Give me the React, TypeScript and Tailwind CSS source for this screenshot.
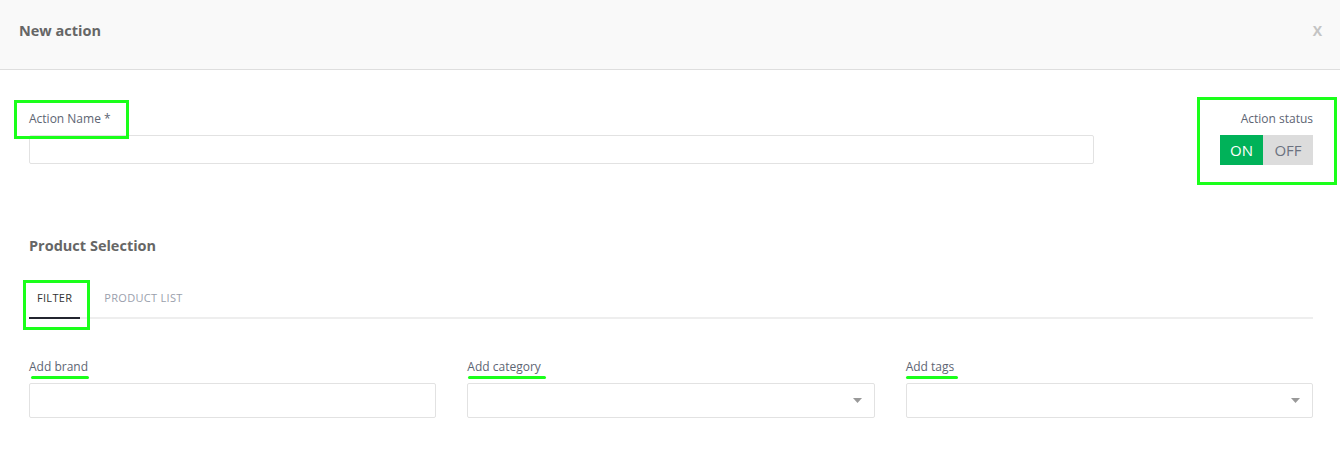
import React, { useState } from "react";

const font = { fontFamily: "'Open Sans', 'Liberation Sans', sans-serif" };

// green annotation marks drawn on top of the screenshot
const Mark = ({ className }: { className: string }) => (
  <div className={`pointer-events-none absolute border-[3px] border-[#1aff1a] ${className}`} />
);

const Line = ({ className }: { className: string }) => (
  <div className={`pointer-events-none absolute h-[3px] rounded-full bg-[#1aff1a] ${className}`} />
);

const Caret = () => (
  <svg width="9" height="5" viewBox="0 0 9 5" className="shrink-0">
    <path d="M0 0h9L4.5 5z" fill="#999" />
  </svg>
);

const Field = ({ label, select, mark }: { label: string; select?: boolean; mark: string }) => (
  <div className="relative flex flex-1 flex-col">
    <label className="text-[12px] leading-4 text-[#5d6573]">{label}</label>
    <Line className={mark} />
    <div className="mt-2 flex h-[35px] items-center justify-end rounded-[2px] border border-[#e2e2e2] bg-white pr-[12px]">
      {select && <Caret />}
    </div>
  </div>
);

export default function App() {
  const [on, setOn] = useState(true);
  const [tab, setTab] = useState("filter");

  const tabCls = (active: boolean) =>
    `-mb-[2px] border-b-2 px-[8px] pb-[13px] pt-[11px] text-[11px] leading-3 tracking-[0.3px] ${
      active ? "border-[#23252f] text-[#333]" : "border-transparent text-[#9aa0ac]"
    }`;

  return (
    <div className="relative h-[451px] w-[1340px] overflow-hidden bg-white" style={font}>
      <div className="flex h-[70px] items-start justify-between border-b border-[#dedede] bg-[#f9f9f9] pl-[19px] pr-[18px] pt-[22px]">
        <h1 className="text-[14.5px] font-bold leading-[18px] text-[#666]">New action</h1>
        <button className="text-[14px] font-bold leading-[18px] text-[#c4c4c4]">X</button>
      </div>

      <div className="pl-[29px] pr-[27px] pt-[41px]">
        <div className="flex items-start justify-between">
          <div className="flex w-[1065px] flex-col">
            <label className="text-[12px] leading-4 text-[#5d6573]">Action Name *</label>
            <input className="mt-2 h-[29px] rounded-[2px] border border-[#e2e2e2] px-2 text-[12px] outline-none" />
          </div>
          <div className="flex flex-col items-end">
            <span className="text-[12px] leading-4 text-[#5d6573]">Action status</span>
            <div className="mt-2 flex h-[30px] text-[15px]">
              <button
                onClick={() => setOn(true)}
                className={`w-[43px] ${on ? "bg-[#00b259] text-white" : "bg-[#dcdcdc] text-[#6b7280]"}`}
              >
                ON
              </button>
              <button
                onClick={() => setOn(false)}
                className={`w-[50px] ${!on ? "bg-[#00b259] text-white" : "bg-[#dcdcdc] text-[#6b7280]"}`}
              >
                OFF
              </button>
            </div>
          </div>
        </div>

        <h2 className="mt-[72px] text-[14.5px] font-bold leading-[18px] text-[#666]">Product Selection</h2>

        <div className="mt-[26px] flex gap-[16px] border-b-2 border-[#eeeeee]">
          <button onClick={() => setTab("filter")} className={tabCls(tab === "filter")}>
            FILTER
          </button>
          <button onClick={() => setTab("list")} className={tabCls(tab === "list")}>
            PRODUCT LIST
          </button>
        </div>

        <div className="mt-[40px] flex gap-[31px]">
          <Field label="Add brand" mark="left-[2px] top-[17px] w-[58px]" />
          <Field label="Add category" select mark="left-[1px] top-[17px] w-[78px]" />
          <Field label="Add tags" select mark="left-0 top-[17px] w-[52px]" />
        </div>
      </div>

      <Mark className="left-[14px] top-[100px] h-[39px] w-[115px]" />
      <Mark className="left-[1197px] top-[97px] h-[88px] w-[140px]" />
      <Mark className="left-[23px] top-[280px] h-[50px] w-[67px]" />
    </div>
  );
}
